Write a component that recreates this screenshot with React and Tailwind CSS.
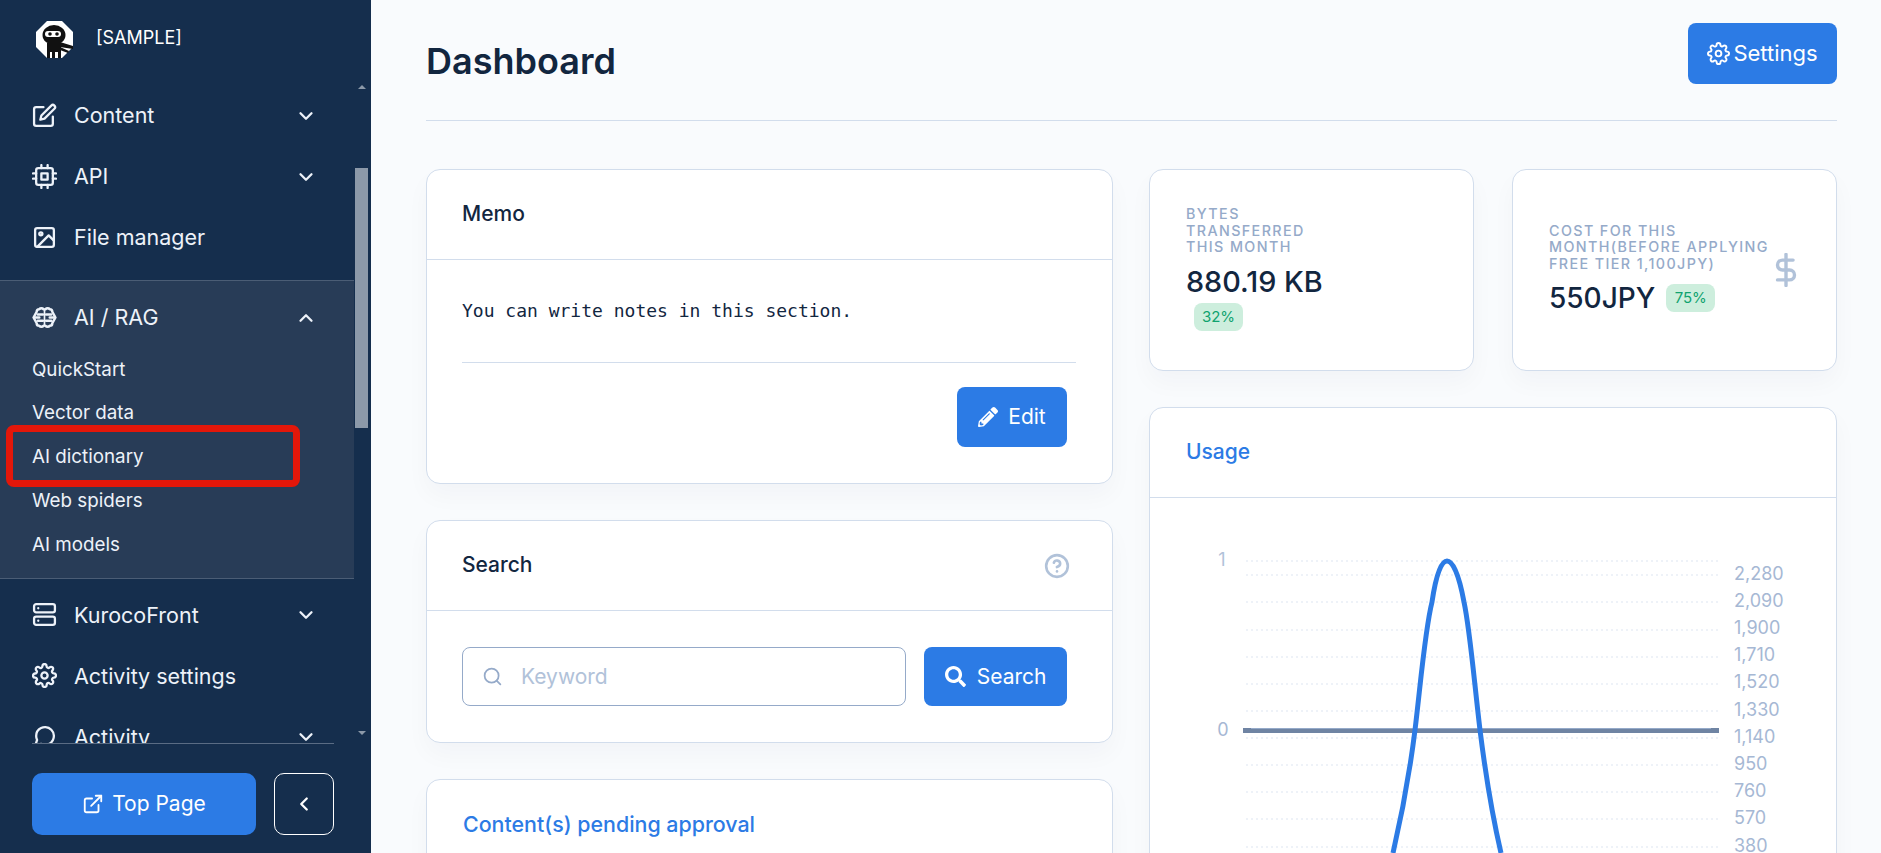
import React from "react";
import {
  FiEdit,
  FiCpu,
  FiImage,
  FiServer,
  FiSettings,
  FiMessageCircle,
  FiExternalLink,
  FiDollarSign,
  FiHelpCircle,
  FiSearch,
  FiChevronDown,
  FiChevronUp,
  FiChevronLeft,
} from "react-icons/fi";
import { FaPencilAlt, FaSearch } from "react-icons/fa";

const gridLines = [561, 575, 602, 630, 657, 684, 711, 738, 765, 792, 819, 847];
const rightLabels = [
  ["2,280", 580],
  ["2,090", 607],
  ["1,900", 634],
  ["1,710", 661],
  ["1,520", 688],
  ["1,330", 716],
  ["1,140", 743],
  ["950", 770],
  ["760", 797],
  ["570", 824],
  ["380", 852],
];

const subItems = ["QuickStart", "Vector data", "AI dictionary", "Web spiders", "AI models"];

const NinjaLogo = () => (
  <svg width="37" height="37" viewBox="0 0 37 37">
    <polygon points="11,0 26,0 37,11 37,26 26,37 11,37 0,26 0,11" fill="#fff" />
    <ellipse cx="18" cy="14" rx="11.5" ry="10" fill="#111" />
    <rect x="9" y="10" width="16" height="6" rx="3" fill="#fff" />
    <circle cx="14" cy="13" r="1.8" fill="#111" />
    <circle cx="21" cy="13" r="1.8" fill="#111" />
    <path d="M11 22h14v9H11z" fill="#111" />
    <path d="M24 21l13 4v3l-13-2z" fill="#111" />
    <path d="M24 26l9 4-1 2-8-3z" fill="#111" />
    <path d="M11 31h3v6h-3zM16 31h3v6h-3zM22 31h3v6h-3z" fill="#111" />
  </svg>
);

const brainLobe =
  "M11 4C10 2.800 8 2.800 7 4 5.500 4 4.500 5 4.500 6.500L1.500 12l3 5.500c0 1.500 1 2.500 2.500 2.500 1 1.200 3 1.200 4 0";
const brainBars = "M10.500 9H5.500M10.500 15H5.500M3 12h4";

const BrainIcon = ({ className }) => (
  <svg viewBox="0 0 24 24" className={className} fill="none" stroke="currentColor" strokeWidth="2.4" strokeLinecap="round" strokeLinejoin="round">
    <path d="M12 4v16" strokeWidth="1.600" />
    <path d={brainLobe} />
    <path d={brainBars} />
    <g transform="matrix(-1 0 0 1 24 0)">
      <path d={brainLobe} />
      <path d={brainBars} />
    </g>
  </svg>
);

const NavRow = ({ icon: Icon, label, chevron }) => (
  <div className="flex h-[61px] shrink-0 items-center pl-8 pr-[37px] text-[21.5px] text-[#edf2f9]">
    <Icon className="h-[25px] w-[25px] shrink-0" strokeWidth={2.2} />
    <span className="ml-[17px] flex-1 whitespace-nowrap">{label}</span>
    {chevron === "down" && <FiChevronDown className="h-[22px] w-[22px]" strokeWidth={2.5} />}
    {chevron === "up" && <FiChevronUp className="h-[22px] w-[22px]" strokeWidth={2.5} />}
  </div>
);

const Sidebar = () => (
  <aside className="relative flex h-full w-[371px] shrink-0 flex-col bg-[#152e4d]">
    <div className="flex h-[85px] shrink-0 items-start pl-9 pt-[21px]">
      <NinjaLogo />
      <span className="ml-[23px] mt-[4px] text-[18px] leading-[26px] text-white">[SAMPLE]</span>
    </div>

    <div className="relative h-[658px] shrink-0 overflow-hidden">
      <div className="flex w-[354px] flex-col">
        <NavRow icon={FiEdit} label="Content" chevron="down" />
        <NavRow icon={FiCpu} label="API" chevron="down" />
        <NavRow icon={FiImage} label="File manager" />

        <div className="mt-3 border-y border-[#4b5d75] bg-[#283c57] pb-3 pt-1.5">
          <NavRow icon={BrainIcon} label="AI / RAG" chevron="up" />
          <div className="flex flex-col">
            {subItems.map((item) => (
              <div key={item} className="flex h-[43.7px] items-center pl-8 text-[18.8px] text-[#edf2f9]">
                {item}
              </div>
            ))}
          </div>
        </div>

        <div className="pt-[5px]">
          <NavRow icon={FiServer} label="KurocoFront" chevron="down" />
          <NavRow icon={FiSettings} label="Activity settings" />
          <NavRow icon={FiMessageCircle} label="Activity" chevron="down" />
        </div>
      </div>

      {/* fake scrollbar */}
      <div className="absolute right-[3px] top-0 h-full w-[13px]">
        <div className="absolute left-1/2 top-0 h-0 w-0 -translate-x-1/2 border-x-[4px] border-b-[4px] border-x-transparent border-b-[#8c99a9]" />
        <div className="absolute left-0 top-[83px] h-[260px] w-full bg-[#8c99a9]" />
        <div className="absolute bottom-[8px] left-1/2 h-0 w-0 -translate-x-1/2 border-x-[4px] border-t-[4px] border-x-transparent border-t-[#8c99a9]" />
      </div>
    </div>

    <div className="ml-8 mr-[37px] flex-1 border-t border-[#5a6c84] pt-[29px]">
      <div className="flex h-[62px] gap-[18px]">
        <button className="flex w-[224px] items-center justify-center gap-[8px] rounded-[10px] bg-[#2c7be5] text-[21px] text-white">
          <FiExternalLink className="h-[22px] w-[22px]" />
          Top Page
        </button>
        <button className="flex w-[60px] items-center justify-center rounded-[10px] border border-white text-white">
          <FiChevronLeft className="h-[22px] w-[22px]" strokeWidth={2.5} />
        </button>
      </div>
    </div>

    {/* red annotation around AI dictionary */}
    <div className="absolute left-[6px] top-[425px] h-[62px] w-[294px] rounded-[8px] border-[7px] border-[#e3170a]" />
  </aside>
);

const Card = ({ className = "", children }) => (
  <div className={`rounded-[14px] border border-[#d2ddec] bg-white shadow-[0_12px_24px_rgba(18,38,63,0.03)] ${className}`}>
    {children}
  </div>
);

const CardHeader = ({ title, blue, children, className = "pl-[35px]" }) => (
  <div className={`flex h-[90px] items-center justify-between border-b border-[#d2ddec] pr-[42px] ${className}`}>
    <h4 className={`-mt-0.5 text-[21px] font-medium ${blue ? "text-[#2c7be5]" : "text-[#12263f]"}`}>{title}</h4>
    {children}
  </div>
);

const StatCard = ({ label, value, badge, wrapBadge, icon }) => (
  <Card className="flex h-[202px] min-w-0 flex-1 basis-0 items-center pl-9 pr-[33px]">
    <div className={`min-w-0 flex-1 ${wrapBadge ? "-mt-[3px]" : "mt-[2px]"}`}>
      <div className="whitespace-nowrap text-[14.3px] font-medium uppercase leading-[16.6px] tracking-[1.4px] text-[#95aac9]">
        {label}
      </div>
      <div className="mt-[5px] flex flex-wrap items-center">
        <span className={`font-medium leading-[42px] text-[#12263f] ${wrapBadge ? "w-full text-[28.8px]" : "mr-[11px] text-[28px]"}`}>
          {value}
        </span>
        <span className={`flex h-7 w-[49px] items-center justify-center rounded-[8px] bg-[#cdeedd] text-[15px] text-[#10a36f] ${wrapBadge ? "ml-2" : ""}`}>
          {badge}
        </span>
      </div>
    </div>
    {icon}
  </Card>
);

const UsageChart = () => (
  <svg width="686" height="356" viewBox="1150 498 686 356" className="block" fontFamily="Inter, sans-serif">
    {gridLines.map((y) => (
      <line key={y} x1="1246" x2="1718" y1={y} y2={y} stroke="#e9eef6" strokeWidth="1.5" strokeDasharray="2 3" />
    ))}
    <text x="1222" y="566" fontSize="18" fill="#b1c2d9" textAnchor="middle">1</text>
    <text x="1223" y="736" fontSize="18" fill="#a6b8d4" textAnchor="middle">0</text>
    {rightLabels.map(([label, y]) => (
      <text key={label} x="1734" y={y} fontSize="18" fill="#a6b8d4">{label}</text>
    ))}
    <rect x="1243" y="728" width="476" height="5" fill="#6f84a3" />
    <rect x="1251" y="728" width="460" height="1" fill="#95aac9" />
    <path
      d="M1393 853 C1403 810 1410 770 1415 730 C1421 680 1425 630 1432 602 C1436 575 1441 561 1447 561 C1453 561 1459 575 1464 602 C1470 630 1474 680 1480 730 C1485 770 1491 810 1501 853"
      fill="none"
      stroke="#2c7be5"
      strokeWidth="5"
    />
  </svg>
);

export default function App() {
  return (
    <div className="flex h-screen w-full overflow-hidden bg-[#f9fbfd] font-['Inter',sans-serif]">
      <Sidebar />

      <main className="flex-1 overflow-hidden pl-[55px] pr-[44px]">
        <div className="flex h-[121px] items-start justify-between border-b border-[#d2ddec] pt-[23px]">
          <h1 className="mt-[11px] text-[36px] font-semibold leading-[54px] text-[#12263f]">Dashboard</h1>
          <button className="flex h-[61px] w-[149px] items-center justify-center gap-[3px] rounded-[8px] bg-[#2c7be5] text-[22px] text-white">
            <FiSettings className="h-[23px] w-[23px]" />
            Settings
          </button>
        </div>

        <div className="mt-12 flex gap-[36px]">
          {/* left column */}
          <div className="flex w-[687px] shrink-0 flex-col gap-[36px]">
            <Card className="h-[315px]">
              <CardHeader title="Memo" />
              <div className="pl-[35px] pr-9">
                <p className="mt-[38px] font-['DejaVu_Sans_Mono',monospace] text-[18px] leading-[26px] text-[#12263f]">
                  You can write notes in this section.
                </p>
                <div className="mt-[38px] border-t border-[#d2ddec]" />
                <div className="mt-6 flex justify-end pr-[9px]">
                  <button className="flex h-[60px] w-[110px] items-center justify-center gap-[10px] rounded-[8px] bg-[#2c7be5] text-[21px] text-white">
                    <FaPencilAlt className="h-[20px] w-[20px]" />
                    Edit
                  </button>
                </div>
              </div>
            </Card>

            <Card className="h-[223px]">
              <CardHeader title="Search">
                <FiHelpCircle className="h-[26px] w-[26px] text-[#b1c2d9]" strokeWidth={2.4} />
              </CardHeader>
              <div className="flex gap-[18px] pl-[35px] pr-[45px] pt-9">
                <div className="flex h-[59px] w-[445px] items-center rounded-[8px] border border-[#95aac9] bg-white pl-[19px]">
                  <FiSearch className="h-[21px] w-[21px] text-[#95aac9]" />
                  <input
                    className="ml-[18px] flex-1 bg-transparent text-[21px] outline-none placeholder:text-[#b1c2d9]"
                    placeholder="Keyword"
                  />
                </div>
                <button className="flex h-[59px] w-[143px] items-center justify-center gap-[11px] rounded-[8px] bg-[#2c7be5] text-[21px] text-white">
                  <FaSearch className="h-[21px] w-[21px]" />
                  Search
                </button>
              </div>
            </Card>

            <Card className="h-[200px]">
              <div className="flex h-[90px] items-center pl-9">
                <h4 className="-mt-0.5 text-[21.4px] font-medium text-[#2c7be5]">Content(s) pending approval</h4>
              </div>
            </Card>
          </div>

          {/* right column */}
          <div className="flex flex-1 flex-col gap-[36px]">
            <div className="flex gap-[38px]">
              <StatCard
                label={<>Bytes<br />transferred<br />this month</>}
                value="880.19 KB"
                badge="32%"
                wrapBadge
              />
              <StatCard
                label={<>Cost for this<br />month(before applying<br />free tier 1,100JPY)</>}
                value="550JPY"
                badge="75%"
                icon={<FiDollarSign className="h-[34px] w-[34px] shrink-0 text-[#b1c2d9]" strokeWidth={2.4} />}
              />
            </div>

            <Card className="h-[600px]">
              <CardHeader title="Usage" blue className="pl-9" />
              <UsageChart />
            </Card>
          </div>
        </div>
      </main>
    </div>
  );
}
